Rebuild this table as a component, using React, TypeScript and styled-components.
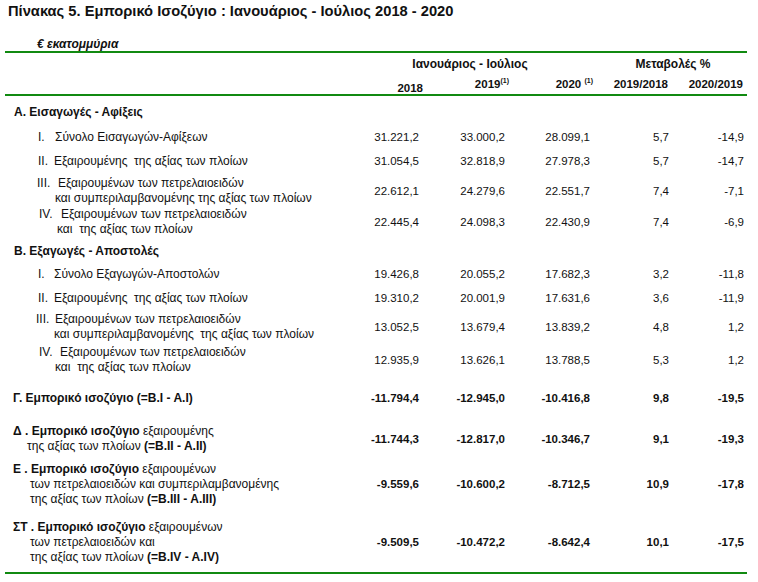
import React from "react";
import styled, { createGlobalStyle } from "styled-components";

const green = "#118a11";

type Line = { text: React.ReactNode; indent: number };
type DataRow = {
  kind: "section" | "item" | "total";
  top: number;
  lines: Line[];
  values?: string[];
  numeral?: string;
  numeralWidth?: number;
};

const rows: DataRow[] = [
  { kind: "section", top: 9, lines: [{ text: "Α. Εισαγωγές - Αφίξεις", indent: 9 }] },
  {
    kind: "item",
    top: 10,
    numeral: "I.",
    numeralWidth: 17,
    lines: [{ text: "Σύνολο Εισαγωγών-Αφίξεων", indent: 33 }],
    values: ["31.221,2", "33.000,2", "28.099,1", "5,7", "-14,9"],
  },
  {
    kind: "item",
    top: 9,
    numeral: "II.",
    numeralWidth: 16,
    lines: [{ text: "Εξαιρουμένης  της αξίας των πλοίων", indent: 33 }],
    values: ["31.054,5", "32.818,9", "27.978,3", "5,7", "-14,7"],
  },
  {
    kind: "item",
    top: 7,
    numeral: "III.",
    numeralWidth: 21,
    lines: [
      { text: "Εξαιρουμένων των πετρελαιοειδών", indent: 32 },
      { text: "και συμπεριλαμβανομένης της αξίας των πλοίων", indent: 50 },
    ],
    values: ["22.612,1", "24.279,6", "22.551,7", "7,4", "-7,1"],
  },
  {
    kind: "item",
    top: 1,
    numeral: "IV.",
    numeralWidth: 22,
    lines: [
      { text: "Εξαιρουμένων των πετρελαιοειδών", indent: 34 },
      { text: "και  της αξίας των πλοίων", indent: 52 },
    ],
    values: ["22.445,4", "24.098,3", "22.430,9", "7,4", "-6,9"],
  },
  { kind: "section", top: 7, lines: [{ text: "Β. Εξαγωγές - Αποστολές", indent: 9 }] },
  {
    kind: "item",
    top: 8,
    numeral: "I.",
    numeralWidth: 16,
    lines: [{ text: "Σύνολο Εξαγωγών-Αποστολών", indent: 33 }],
    values: ["19.426,8", "20.055,2", "17.682,3", "3,2", "-11,8"],
  },
  {
    kind: "item",
    top: 9,
    numeral: "II.",
    numeralWidth: 16,
    lines: [{ text: "Εξαιρουμένης  της αξίας των πλοίων", indent: 33 }],
    values: ["19.310,2", "20.001,9", "17.631,6", "3,6", "-11,9"],
  },
  {
    kind: "item",
    top: 6,
    numeral: "III.",
    numeralWidth: 19,
    lines: [
      { text: "Εξαιρουμένων των πετρελαιοειδών", indent: 31 },
      { text: "και συμπεριλαμβανομένης  της αξίας των πλοίων", indent: 49 },
    ],
    values: ["13.052,5", "13.679,4", "13.839,2", "4,8", "1,2"],
  },
  {
    kind: "item",
    top: 3,
    numeral: "IV.",
    numeralWidth: 21,
    lines: [
      { text: "Εξαιρουμένων των πετρελαιοειδών", indent: 34 },
      { text: "και  της αξίας των πλοίων", indent: 50 },
    ],
    values: ["12.935,9", "13.626,1", "13.788,5", "5,3", "1,2"],
  },
  {
    kind: "total",
    top: 16,
    lines: [{ text: <b>Γ. Εμπορικό ισοζύγιο (=B.I - A.I)</b>, indent: 8 }],
    values: ["-11.794,4", "-12.945,0", "-10.416,8", "9,8", "-19,5"],
  },
  {
    kind: "total",
    top: 18,
    lines: [
      { text: <><b>Δ . Εμπορικό ισοζύγιο</b> εξαιρουμένης</>, indent: 8 },
      { text: <>της αξίας των πλοίων <b>(=B.II - A.II)</b></>, indent: 22 },
    ],
    values: ["-11.744,3", "-12.817,0", "-10.346,7", "9,1", "-19,3"],
  },
  {
    kind: "total",
    top: 8,
    lines: [
      { text: <><b>Ε . Εμπορικό ισοζύγιο</b> εξαιρουμένων</>, indent: 8 },
      { text: "των πετρελαιοειδών και συμπεριλαμβανομένης", indent: 25 },
      { text: <>της αξίας των πλοίων <b>(=B.III - A.III)</b></>, indent: 25 },
    ],
    values: ["-9.559,6", "-10.600,2", "-8.712,5", "10,9", "-17,8"],
  },
  {
    kind: "total",
    top: 13,
    lines: [
      { text: <><b>ΣΤ . Εμπορικό ισοζύγιο</b> εξαιρουμένων</>, indent: 8 },
      { text: "των πετρελαιοειδών και", indent: 25 },
      { text: <>της αξίας των πλοίων <b>(=B.IV - A.IV)</b></>, indent: 25 },
    ],
    values: ["-9.509,5", "-10.472,2", "-8.642,4", "10,1", "-17,5"],
  },
];

function App() {
  return (
    <>
      <GlobalStyle />
      <Page>
        <Title>Πίνακας 5. Εμπορικό Ισοζύγιο : Ιανουάριος - Ιούλιος 2018 - 2020</Title>
        <Unit>€ εκατομμύρια</Unit>
        <Rule />
        <PeriodRow>
          <span />
          <GroupHead $shift={10}>Ιανουάριος - Ιούλιος</GroupHead>
          <GroupHead $shift={12}>Μεταβολές %</GroupHead>
        </PeriodRow>
        <YearRow>
          <span />
          <YearHead $low>2018</YearHead>
          <YearHead>
            2019<Sup>(1)</Sup>
          </YearHead>
          <YearHead>
            2020 <Sup>(1)</Sup>
          </YearHead>
          <YearHead>2019/2018</YearHead>
          <YearHead>2020/2019</YearHead>
        </YearRow>
        <Rule />
        {rows.map((row, i) => (
          <Row key={i} $top={row.top}>
            <Label $bold={row.kind === "section"}>
              {row.lines.map((line, j) => (
                <LabelLine key={j} $indent={line.indent}>
                  {j === 0 && row.numeral && (
                    <Numeral $width={row.numeralWidth || 16}>{row.numeral}</Numeral>
                  )}
                  {line.text}
                </LabelLine>
              ))}
            </Label>
            {row.values?.map((v, k) => (
              <Value key={k} $bold={row.kind === "total"}>
                {v}
              </Value>
            ))}
          </Row>
        ))}
        <Rule $top={7} />
      </Page>
    </>
  );
}

const GlobalStyle = createGlobalStyle`
  body {
    margin: 0;
    background: #fff;
    color: #111;
    font-family: "Liberation Sans", Arial, sans-serif;
  }
`;

const Page = styled.div`
  width: 742px;
  margin-left: 5px;
  padding-top: 3px;
`;

const Title = styled.div`
  margin-left: 3px;
  font-size: 14.7px;
  font-weight: bold;
  line-height: 17px;
`;

const Unit = styled.div`
  margin: 18px 0 0 32px;
  font-size: 12px;
  font-weight: bold;
  font-style: italic;
  line-height: 13px;
`;

const Rule = styled.div<{ $top?: number }>`
  height: 2px;
  margin-top: ${(p) => p.$top || 0}px;
  background: ${green};
`;

const PeriodRow = styled.div`
  display: grid;
  grid-template-columns: 335px 250px 154px;
  padding-top: 2px;
  height: 17px;
  align-items: center;
`;

const GroupHead = styled.div<{ $shift: number }>`
  padding-left: ${(p) => p.$shift}px;
  text-align: center;
  font-size: 12px;
  font-weight: bold;
`;

const YearRow = styled.div`
  display: grid;
  grid-template-columns: 335px 83px 86px 84px 75px 75px;
  height: 20px;
  padding-top: 2px;
  align-items: center;
`;

const YearHead = styled.div<{ $low?: boolean }>`
  text-align: right;
  font-size: 11.5px;
  font-weight: bold;
  padding-top: ${(p) => (p.$low ? 7 : 0)}px;
`;

const Sup = styled.sup`
  font-size: 7px;
  vertical-align: 5px;
  line-height: 0;
`;

const Row = styled.div<{ $top: number }>`
  display: grid;
  grid-template-columns: 335px 79px 86px 85px 79px 75px;
  align-items: center;
  margin-top: ${(p) => p.$top}px;
  font-size: 11.5px;
  line-height: 15px;
`;

const Label = styled.div<{ $bold?: boolean }>`
  font-size: 12px;
  font-weight: ${(p) => (p.$bold ? "bold" : "normal")};
`;

const LabelLine = styled.div<{ $indent: number }>`
  padding-left: ${(p) => p.$indent}px;
  white-space: pre;
`;

const Numeral = styled.span<{ $width: number }>`
  display: inline-block;
  width: ${(p) => p.$width}px;
`;

const Value = styled.div<{ $bold?: boolean }>`
  text-align: right;
  font-weight: ${(p) => (p.$bold ? "bold" : "normal")};
`;

export default App;
